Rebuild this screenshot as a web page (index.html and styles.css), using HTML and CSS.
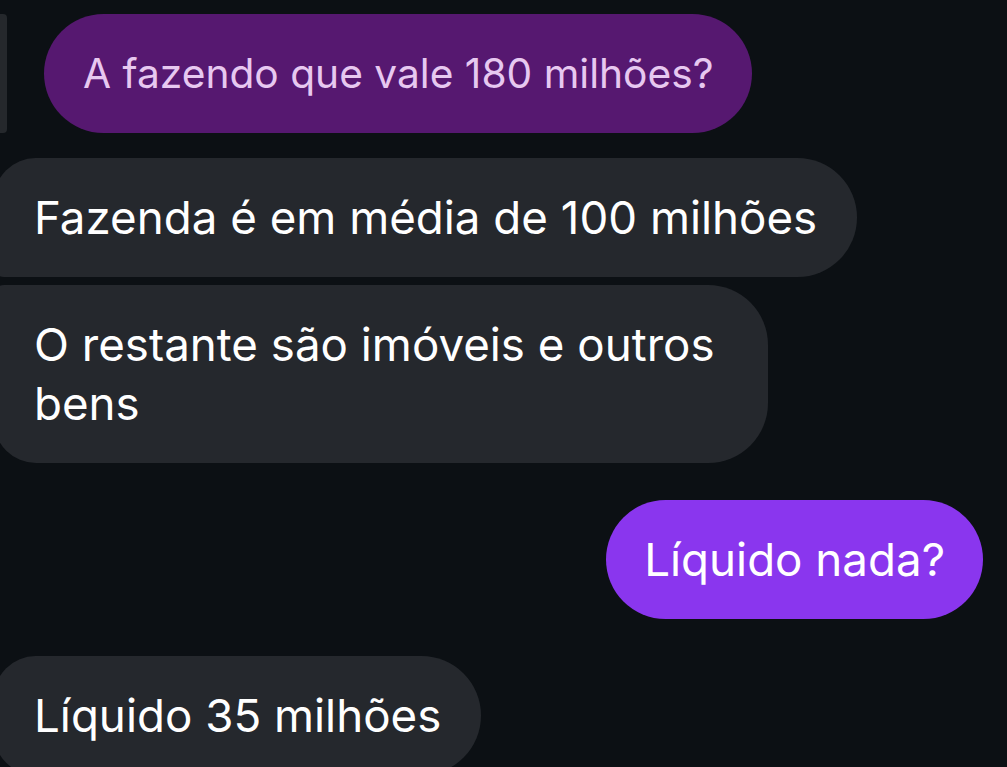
FILE: index.html
```html
<!DOCTYPE html>
<html lang="pt">
<head>
  <meta charset="UTF-8">
  <meta name="viewport" content="width=device-width, initial-scale=1.0">
  <title>Conversa</title>
  <link rel="stylesheet" href="styles.css">
</head>
<body>
  <div class="chat">
    <div class="reply">
      <div class="reply-bar"></div>
      <div class="bubble quoted">A fazendo que vale 180 milhões?</div>
    </div>
    <div class="group">
      <div class="bubble them first">Fazenda é em média de 100 milhões</div>
      <div class="bubble them last">O restante são imóveis e outros<br>bens</div>
    </div>
    <div class="bubble me">Líquido nada?</div>
    <div class="bubble them single">Líquido 35 milhões</div>
  </div>
</body>
</html>
```

FILE: styles.css
```css
*{margin: 0; padding: 0; box-sizing: border-box;}
html, body{height: 100%;}
body{background: #0c1014; overflow: hidden; font-family: "Inter", "Noto Sans", sans-serif; -webkit-font-smoothing: antialiased;}
.chat{display: flex; flex-direction: column; align-items: flex-start; padding-top: 14px;}
.bubble{font-size: 45.7px; line-height: 59px; padding: 30px 40px; border-radius: 60px; color: #fff; white-space: nowrap;}
.reply{display: flex; align-items: stretch;}
.reply-bar{width: 7px; background: #25282c; border-radius: 0 4px 4px 0;}
.bubble.quoted{margin-left: 37px; background: #561870; color: #e7c8f0; font-size: 40.7px; padding: 30px 39px;}
.group{display: flex; flex-direction: column; align-items: flex-start; gap: 8px; margin-top: 25px;}
.bubble.them{background: #25282d; margin-left: -6px;}
.bubble.first{border-radius: 42px 60px 60px 10px;}
.bubble.last{border-radius: 10px 60px 60px 42px; padding-right: 53px;}
.bubble.me{align-self: flex-end; margin: 37px 24px 0 0; background: #8a36ee; padding: 30px 38px;}
.bubble.single{margin-top: 37px; border-radius: 42px 60px 60px 42px;}
```
